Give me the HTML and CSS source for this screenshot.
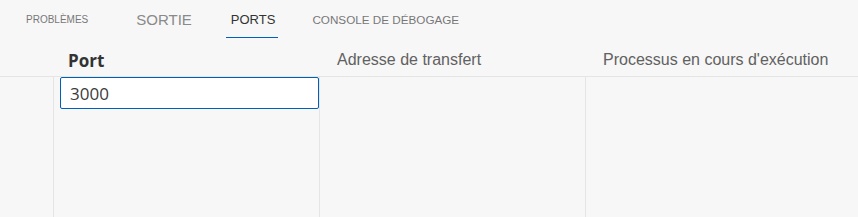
FILE: index.html
```html
<!DOCTYPE html>
<html lang="fr">
  <head>
    <meta charset="UTF-8" />
    <title>Ports</title>
    <link rel="stylesheet" href="styles.css">
  </head>

  <body>
    <div class="panel">
      <div class="tabs">
        <div class="tab problems">PROBLÈMES</div>
        <div class="tab output">SORTIE</div>
        <div class="tab ports active">PORTS</div>
        <div class="tab debug">CONSOLE DE DÉBOGAGE</div>
      </div>
      <!--Tabs end-->

      <div class="table">
        <div class="row head">
          <div class="cell first"></div>
          <div class="cell port">Port</div>
          <div class="cell">Adresse de transfert</div>
          <div class="cell">Processus en cours d'exécution</div>
        </div>
        <div class="row body">
          <div class="cell first"></div>
          <div class="cell port">
            <input type="text" class="edit" value="3000" />
          </div>
          <div class="cell"></div>
          <div class="cell"></div>
        </div>
      </div>
      <!--Table end-->
    </div>
  </body>
</html>
```

FILE: styles.css
```css
body,
html {
  margin: 0;
  padding: 0;
  height: 100%;
  background: #f7f7f7;
  font-family: "Liberation Sans", Arial, sans-serif;
  overflow: hidden;
}

.panel {
  display: flex;
  flex-direction: column;
  height: 100%;
}

.tabs {
  display: flex;
  align-items: center;
  height: 40px;
  padding-left: 21px;
}

.tab {
  position: relative;
  padding: 0 5px;
  line-height: 40px;
  color: #777;
}

.problems {
  font-size: 10px;
}

.output {
  font-size: 15px;
  margin-left: 38px;
  color: #8a8a8a;
}

.ports {
  font-size: 13px;
  margin-left: 29px;
  color: #333;
}

.debug {
  font-size: 11.7px;
  margin-left: 27px;
}

.active::after {
  content: "";
  position: absolute;
  left: 0;
  right: 2px;
  bottom: 2px;
  height: 1px;
  background: #005fb8;
}

.table {
  display: flex;
  flex-direction: column;
  flex: 1;
}

.row {
  display: grid;
  grid-template-columns: 53px 266px 266px 1fr;
}

.head {
  height: 36px;
  border-bottom: 1px solid #e5e5e5;
  align-items: center;
}

.head .cell {
  padding-left: 18px;
  padding-top: 4px;
  font-size: 16px;
  color: #616161;
}

.head .first {
  padding: 0;
}

.head .port {
  padding-left: 15px;
  font-family: "Open Sans", sans-serif;
  font-weight: bold;
  font-size: 17px;
  color: #333;
}

.body {
  flex: 1;
}

.body .cell {
  box-sizing: border-box;
  border-left: 1px solid #e5e5e5;
}

.body .first {
  border-left: 0;
}

.body .port {
  padding-left: 6px;
}

.edit {
  display: block;
  box-sizing: border-box;
  width: 100%;
  height: 32px;
  margin: 0;
  padding: 0 9px;
  border: 1px solid #005fb8;
  border-radius: 2px;
  background: #fff;
  font-family: "Open Sans", sans-serif;
  font-size: 17px;
  color: #3b3b3b;
  outline: none;
}
```
